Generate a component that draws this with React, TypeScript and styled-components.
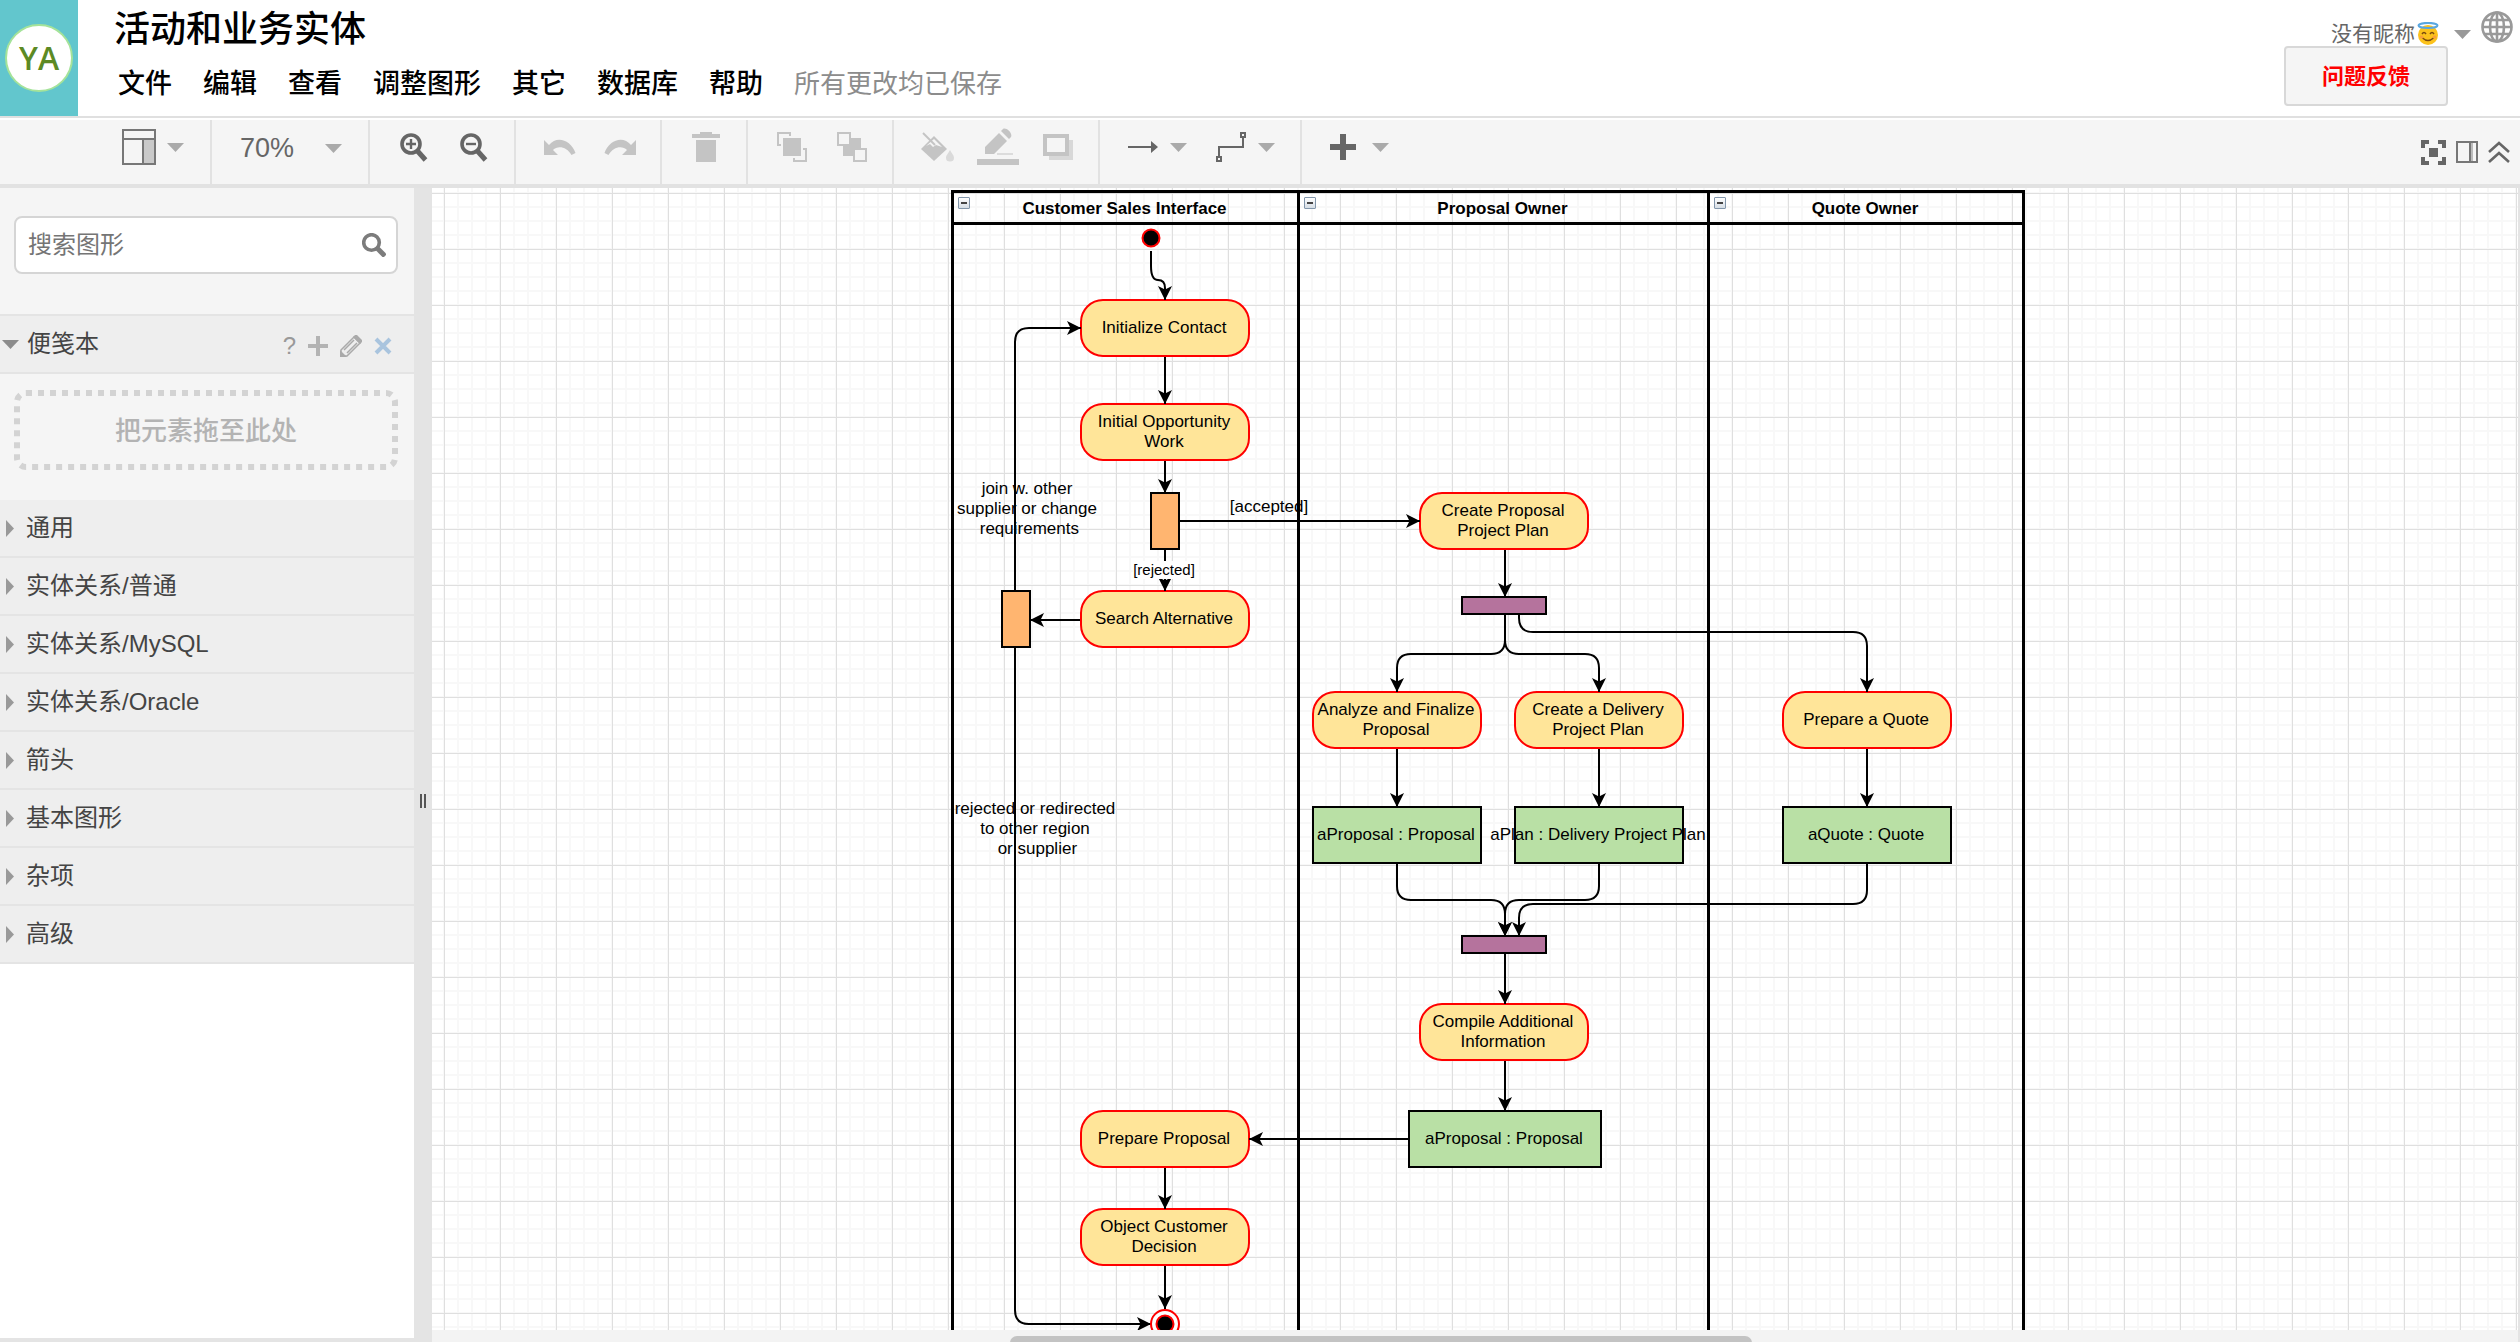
import React from "react";
import styled, { createGlobalStyle } from "styled-components";

const sans = `"Liberation Sans", Arial, "Noto Sans CJK SC", sans-serif`;

const GlobalStyle = createGlobalStyle`
  * { box-sizing: border-box; }
  body { margin: 0; background: #fff; font-family: ${sans}; overflow: hidden; }
  button, input, select { font-family: inherit; margin: 0; }
  svg { display: block; flex: none; }
`;

const Page = styled.div`
  display: flex;
  flex-direction: column;
  height: 100vh;
`;

/* ---------- header ---------- */

const Header = styled.header`
  display: flex;
  flex: none;
  height: 118px;
  border-bottom: 2px solid #e0e0e0;
`;

const Logo = styled.a`
  display: flex;
  align-items: center;
  justify-content: center;
  flex: none;
  width: 78px;
  background: #62c6cd;
  text-decoration: none;
`;

const LogoDisc = styled.span`
  display: flex;
  align-items: center;
  justify-content: center;
  width: 68px;
  height: 68px;
  border: 2px solid #a5e39a;
  border-radius: 50%;
  background: #fff;
  color: #5c8a24;
  font: 600 32px/32px "Open Sans", ${sans};
`;

const TitleBlock = styled.div`
  display: flex;
  flex-direction: column;
  flex: 1;
  gap: 14px;
  padding: 6px 0 0 36px;
`;

const DocTitle = styled.h1`
  margin: 0;
  font-size: 36px;
  line-height: 48px;
  font-weight: 500;
  color: #000;
`;

const MenuBar = styled.nav`
  display: flex;
  align-items: center;
  gap: 31px;
  padding-left: 4px;
`;

const MenuButton = styled.button`
  padding: 0;
  border: 0;
  background: none;
  font-size: 27px;
  line-height: 32px;
  font-weight: 500;
  color: #000;
`;

const SaveStatus = styled.span`
  font-size: 26px;
  line-height: 32px;
  color: #8c8c8c;
`;

const Account = styled.div`
  display: flex;
  flex-direction: column;
  align-items: flex-end;
`;

const UserRow = styled.div`
  display: flex;
  align-items: center;
  gap: 10px;
  height: 46px;
  padding: 8px 7px 0 0;
`;

const UserButton = styled.button`
  display: flex;
  align-items: center;
  gap: 2px;
  padding: 14px 0 0;
  border: 0;
  background: none;
  font-size: 21px;
  line-height: 24px;
  color: #666;
`;

const UserCaret = styled.span`
  padding-left: 13px;
`;

const IconButton = styled.button`
  display: flex;
  padding: 0;
  border: 0;
  background: none;
  color: inherit;
`;

const FeedbackButton = styled.button`
  width: 164px;
  height: 60px;
  margin-right: 72px;
  padding: 0 0 4px;
  border: 2px solid #d8d8d8;
  border-radius: 4px;
  background: #f5f5f5;
  font-size: 22px;
  font-weight: 700;
  color: #f00;
`;

/* ---------- toolbar ---------- */

const Toolbar = styled.div`
  display: flex;
  flex: none;
  height: 70px;
  padding-left: 98px;
  border-top: 2px solid #fff;
  border-bottom: 4px solid #e2e2e2;
  background: #f5f5f5;
`;

const Group = styled.div<{ $last?: boolean }>`
  display: flex;
  padding: 0 10px 0 14px;
  border-right: ${(p) => (p.$last ? "0" : "2px solid #e2e2e2")};
`;

const Tool = styled.button`
  display: flex;
  align-items: center;
  justify-content: center;
  width: 60px;
  padding: 0 0 10px;
  border: 0;
  background: none;
  color: #666;
  &:disabled { color: #c4c4c4; }
`;

const MenuTool = styled.button`
  display: flex;
  align-items: center;
  gap: 11px;
  width: 88px;
  padding: 0 0 10px 13px;
  border: 0;
  background: none;
  color: #666;
`;

const ViewMenuTool = styled(MenuTool)`
  padding-left: 10px;
`;

const ZoomField = styled.label`
  display: flex;
  align-items: center;
  width: 132px;
  padding: 0 16px 8px 14px;
`;

const ZoomSelect = styled.select`
  flex: 1;
  min-width: 0;
  padding: 0;
  border: 0;
  background: none;
  appearance: none;
  font-size: 27px;
  line-height: 32px;
  color: #666;
`;

const ViewTools = styled.div`
  display: flex;
  align-items: center;
  gap: 10px;
  margin-left: auto;
  padding-right: 10px;
  color: #666;
`;

/* ---------- sidebar ---------- */

const Body = styled.div`
  display: flex;
  flex: 1;
  min-height: 0;
`;

const Sidebar = styled.aside`
  flex: none;
  width: 414px;
  border-bottom: 4px solid #e4e4e4;
  background: #fff;
`;

const SearchArea = styled.div`
  padding: 28px 16px 40px 14px;
  background: #f5f5f5;
`;

const SearchBox = styled.label`
  display: flex;
  align-items: center;
  height: 58px;
  padding: 0 10px 0 12px;
  border: 2px solid #d5d5d5;
  border-radius: 8px;
  background: #fff;
`;

const SearchInput = styled.input`
  flex: 1;
  min-width: 0;
  padding: 0;
  border: 0;
  outline: 0;
  background: none;
  font-size: 24px;
  line-height: 32px;
  &::placeholder { color: #757575; opacity: 1; }
`;

const ScratchHeader = styled.div`
  display: flex;
  align-items: center;
  height: 60px;
  padding: 0 22px 0 2px;
  border: solid #e4e4e4;
  border-width: 2px 0;
  background: #eee;
`;

const ScratchToggle = styled.button`
  display: flex;
  align-items: center;
  flex: 1;
  gap: 8px;
  padding: 0;
  border: 0;
  background: none;
  font-size: 24px;
  line-height: 32px;
  color: #444;
`;

const ScratchTools = styled.div`
  display: flex;
  align-items: center;
  gap: 12px;
  padding-top: 4px;
`;

const HelpButton = styled(IconButton)`
  font-size: 24px;
  line-height: 24px;
  color: #999;
`;

const ScratchArea = styled.div`
  padding: 16px 16px 30px 14px;
  background: #f5f5f5;
`;

const DropZone = styled.div`
  position: relative;
  display: flex;
  align-items: center;
  justify-content: center;
  height: 80px;
  padding-bottom: 4px;
  font-size: 26px;
  font-weight: 500;
  color: #b3b3b3;
`;

const DropFrame = styled.svg`
  position: absolute;
  inset: 0;
  width: 100%;
  height: 100%;
  rect { width: calc(100% - 6px); height: calc(100% - 6px); }
`;

const Section = styled.button`
  display: flex;
  align-items: center;
  gap: 12px;
  width: 100%;
  height: 58px;
  padding: 0 0 0 6px;
  border: 0;
  border-bottom: 2px solid #e4e4e4;
  background: #eee;
  font-size: 24px;
  line-height: 32px;
  color: #444;
`;

const Splitter = styled.div`
  display: flex;
  align-items: center;
  justify-content: center;
  gap: 2px;
  flex: none;
  width: 18px;
  padding: 72px 0 0;
  background: #e4e4e4;
`;

const Grip = styled.span`
  width: 2px;
  height: 14px;
  background: #555;
`;

/* ---------- canvas ---------- */

const Stage = styled.main`
  display: flex;
  flex-direction: column;
  flex: 1;
  min-width: 0;
  border-right: 2px solid #e4e4e4;
`;

const Canvas = styled.div`
  position: relative;
  flex: 1;
  min-height: 0;
  overflow: hidden;
  background-color: #fff;
  background-image:
    linear-gradient(#dfdfdf 1px, transparent 1px),
    linear-gradient(90deg, #dfdfdf 1px, transparent 1px),
    linear-gradient(#f8f8f8 2px, transparent 2px),
    linear-gradient(90deg, #f8f8f8 2px, transparent 2px);
  background-size: 56px 56px, 56px 56px, 14px 14px, 14px 14px;
  background-position: 12px 5px, 12px 5px, 11px 4px, 11px 4px;
`;

const ScrollTrack = styled.div`
  flex: none;
  height: 12px;
  padding: 6px 0 0 578px;
  background: #f3f3f3;
  overflow: hidden;
`;

const ScrollThumb = styled.div`
  width: 742px;
  height: 14px;
  border-radius: 7px;
  background: #c3c3c3;
`;

const Lanes = styled.div`
  position: absolute;
  left: 519px;
  top: 2px;
  bottom: -60px;
  display: flex;
`;

const Lane = styled.section<{ $w: number }>`
  position: relative;
  width: ${(p) => p.$w}px;
  border: 3px solid #000;
  & + & { margin-left: -3px; }
`;

const LaneTitle = styled.h2`
  margin: 0;
  height: 32px;
  padding: 1px 2px 0 0;
  border-bottom: 3px solid #000;
  font-size: 17px;
  line-height: 29px;
  text-align: center;
  color: #000;
`;

const Collapse = styled.button`
  position: absolute;
  left: 4px;
  top: 4px;
  display: flex;
  align-items: center;
  justify-content: center;
  width: 12px;
  height: 12px;
  padding: 0;
  border: 1px solid #8296ab;
  border-radius: 1px;
  background: linear-gradient(#fff, #d5dde5);
  &::before { content: ""; width: 6px; height: 2px; background: #444; }
`;

const fills = { action: "#ffe599", object: "#b9e0a5", fork: "#ffb570", bar: "#b5739d" };
type Kind = keyof typeof fills;

const Node = styled.div<{ $x: number; $y: number; $w: number; $h: number; $kind: Kind }>`
  position: absolute;
  left: ${(p) => p.$x}px;
  top: ${(p) => p.$y}px;
  width: ${(p) => p.$w}px;
  height: ${(p) => p.$h}px;
  display: flex;
  align-items: center;
  justify-content: center;
  padding: 0 2px 1px 0;
  border: 2px solid ${(p) => (p.$kind === "action" ? "#f00" : "#000")};
  border-radius: ${(p) => (p.$kind === "action" ? 23 : 0)}px;
  background: ${(p) => fills[p.$kind]};
  font-size: 17px;
  line-height: 20px;
  text-align: center;
  white-space: pre;
  color: #000;
`;

const Edges = styled.svg`
  position: absolute;
  left: 0;
  top: 0;
  width: 100%;
  height: 100%;
  pointer-events: none;
`;

const EdgeLabel = styled.div<{ $x: number; $y: number; $small?: boolean }>`
  position: absolute;
  left: ${(p) => p.$x}px;
  top: ${(p) => p.$y}px;
  transform: translate(-50%, -50%);
  background: ${(p) => (p.$small ? "#fff" : "none")};
  font-size: ${(p) => (p.$small ? 15 : 17)}px;
  line-height: ${(p) => (p.$small ? 18 : 20)}px;
  text-align: center;
  white-space: pre;
  color: #000;
`;

/* ---------- icons ---------- */

const Caret = ({ color = "#aaa" }: { color?: string }) => (
  <svg width="17" height="9" viewBox="0 0 17 9"><path d="M0 0h17L8.500 9z" fill={color} /></svg>
);
const CaretRight = () => (
  <svg width="8" height="17" viewBox="0 0 8 17"><path d="M0 0v17l8-8.500z" fill="#999" /></svg>
);

const FormatIcon = () => (
  <svg width="34" height="36" viewBox="0 0 34 36" fill="none" stroke="#777" strokeWidth="2">
    <path d="M21 10h12v25H21z" fill="#c9c9c9" />
    <path d="M1 1h32v34H1zM1 10h32" />
  </svg>
);

const Magnifier = ({ plus }: { plus?: boolean }) => (
  <svg width="28" height="30" viewBox="0 0 28 30" fill="none" stroke="currentColor">
    <circle cx="11" cy="12" r="9" strokeWidth="3.600" />
    <path d="M17.500 19l8 9" strokeWidth="5" />
    <path d={plus ? "M6 12h10M11 7v10" : "M6 12h10"} strokeWidth="2.400" />
  </svg>
);

const Bend = ({ flip }: { flip?: boolean }) => (
  <svg width="32" height="18" viewBox="0 0 32 18" fill="currentColor">
    <g transform={flip ? "translate(32 0) scale(-1 1)" : undefined}>
      <path d="M0 2v15h14l-5-5c5-5 14-3 18.500 5l4-2C27 2 13-3 5 7z" />
    </g>
  </svg>
);

const TrashIcon = () => (
  <svg width="28" height="30" viewBox="0 0 28 30" fill="currentColor">
    <path d="M8 0h12v2h8v4H0V2h8zM4 8h20v22H4z" />
  </svg>
);

const FrontIcon = () => (
  <svg width="30" height="30" viewBox="0 0 30 30" fill="none" stroke="currentColor" strokeWidth="2">
    <path d="M6 6h18v18H6z" fill="currentColor" stroke="none" />
    <path d="M4 13H1V1h12v3M26 17h3v12H17v-3" />
  </svg>
);

const BackIcon = () => (
  <svg width="30" height="30" viewBox="0 0 30 30" fill="#f5f5f5" stroke="currentColor" strokeWidth="2">
    <path d="M6 6h18v18H6z" fill="currentColor" stroke="none" />
    <path d="M1 1h12v12H1zM17 17h12v12H17z" />
  </svg>
);

const FillIcon = () => (
  <svg width="34" height="30" viewBox="0 0 34 30">
    <path d="M0 17L13 4l13 13-13 12z" fill="currentColor" />
    <path d="M13 7l8 8-6-2-3 2-3-3-4 2z" fill="#f5f5f5" />
    <path d="M2 1l12 12" stroke="currentColor" strokeWidth="2" />
    <path d="M29 18c2 4 4 5 4 8a4 3.500 0 0 1-8 0c0-3 2-4 4-8z" fill="#dadada" />
  </svg>
);

const LineColorIcon = () => (
  <svg width="42" height="38" viewBox="0 0 42 38" fill="currentColor">
    <path d="M8 19L22 5l8 8-13 13H8zM24 3l2-2c3-2 10 4 8 8l-2 2z" />
    <path d="M20 25h16v2H20z" fill="#dcdcdc" />
    <path d="M0 31h42v6H0z" />
  </svg>
);

const ShadowIcon = () => (
  <svg width="30" height="26" viewBox="0 0 30 26" fill="none">
    <path d="M6 6h24v20H6z" fill="#d8d8d8" />
    <path d="M2 2h22v18H2z" fill="#f5f5f5" stroke="currentColor" strokeWidth="4" />
  </svg>
);

const ArrowIcon = () => (
  <svg width="32" height="14" viewBox="0 0 32 14" fill="currentColor">
    <path d="M1 6h23V1l7 6-7 6V8H1z" />
  </svg>
);

const WaypointIcon = () => (
  <svg width="32" height="32" viewBox="0 0 32 32" fill="none" stroke="currentColor" strokeWidth="2">
    <path d="M4 25V16h24V7M2 26h4v4H2zM26 2h4v4h-4z" />
  </svg>
);

const InsertIcon = () => (
  <svg width="32" height="28" viewBox="0 0 32 28" stroke="currentColor" strokeWidth="6">
    <path d="M1 14h26M14 1v26" />
  </svg>
);

const AddIcon = () => (
  <svg width="20" height="20" viewBox="0 0 20 20" stroke="#b3b3b3" strokeWidth="4">
    <path d="M0 10h20M10 0v20" />
  </svg>
);

const FullscreenIcon = () => (
  <svg width="25" height="25" viewBox="0 0 25 25" fill="currentColor">
    <path d="M0 0h8v4H4v4H0zM17 0h8v8h-4V4h-4zM0 17h4v4h4v4H0zM21 17h4v8h-8v-4h4zM8 8h9v9H8z" />
  </svg>
);

const PanelIcon = () => (
  <svg width="22" height="22" viewBox="0 0 22 22" fill="none" stroke="#777" strokeWidth="2">
    <path d="M16 1v20" stroke="#bbb" />
    <path d="M1 1h20v20H1zM14 1v20" />
  </svg>
);

const ChevronsIcon = () => (
  <svg width="22" height="22" viewBox="0 0 22 22" fill="none" stroke="currentColor" strokeWidth="2.600">
    <path d="M1 11l10-9 10 9M1 21l10-9 10 9" />
  </svg>
);

const GlobeIcon = () => (
  <svg width="32" height="32" viewBox="0 0 32 32" fill="none" stroke="#999" strokeWidth="2.600">
    <circle cx="16" cy="16" r="14.500" />
    <ellipse cx="16" cy="16" rx="7" ry="14.500" />
    <path d="M16 1v30M2 16h28M4 9h24M4 23h24" />
  </svg>
);

const AngelFace = () => (
  <svg width="22" height="24" viewBox="0 0 22 24">
    <circle cx="11" cy="13" r="10" fill="#fcc21b" />
    <ellipse cx="11" cy="3.500" rx="9.500" ry="2.600" fill="none" stroke="#5aa7e0" strokeWidth="2" />
    <path d="M5 12q2-3 4 0M13 12q2-3 4 0M5.500 16q5.500 5 11 0" fill="none" stroke="#7a4a10" strokeWidth="1.500" />
    <ellipse cx="4.500" cy="15" rx="2" ry="1.500" fill="#f9a03c" />
    <ellipse cx="17.500" cy="15" rx="2" ry="1.500" fill="#f9a03c" />
  </svg>
);

const SearchIcon = () => (
  <svg width="24" height="24" viewBox="0 0 24 24" fill="none" stroke="#7c7c7c">
    <circle cx="9.500" cy="9.500" r="7.800" strokeWidth="3.600" />
    <path d="M15 15l8 8" strokeWidth="5" />
  </svg>
);

const PencilIcon = () => (
  <svg width="22" height="22" viewBox="0 0 22 22" fill="none" stroke="#aaa" strokeWidth="1.500">
    <path d="M1 15L14 2l6 6L7 21H1z" />
    <path d="M4 15L14 5M7 18L17 8" />
    <path d="M0 15l7 7H0zM13 2l2-2h2l5 5v2l-2 2z" fill="#aaa" stroke="none" />
  </svg>
);

const CrossIcon = () => (
  <svg width="18" height="18" viewBox="0 0 18 18" stroke="#a9c4de" strokeWidth="4">
    <path d="M2 2l14 14M16 2L2 16" />
  </svg>
);

/* ---------- data ---------- */

const menus = ["文件", "编辑", "查看", "调整图形", "其它", "数据库", "帮助"];
const sections = ["通用", "实体关系/普通", "实体关系/MySQL", "实体关系/Oracle", "箭头", "基本图形", "杂项", "高级"];
const lanes = [
  { title: "Customer Sales Interface", w: 349 },
  { title: "Proposal Owner", w: 413 },
  { title: "Quote Owner", w: 318 },
];

const nodes: { x: number; y: number; w?: number; h?: number; kind: Kind; text?: string }[] = [
  { x: 648, y: 111, kind: "action", text: "Initialize Contact" },
  { x: 648, y: 215, kind: "action", text: "Initial Opportunity\nWork" },
  { x: 718, y: 304, w: 30, kind: "fork" },
  { x: 648, y: 402, kind: "action", text: "Search Alternative" },
  { x: 569, y: 402, w: 30, kind: "fork" },
  { x: 987, y: 304, kind: "action", text: "Create Proposal\nProject Plan" },
  { x: 1029, y: 408, w: 86, h: 19, kind: "bar" },
  { x: 880, y: 503, kind: "action", text: "Analyze and Finalize\nProposal" },
  { x: 1082, y: 503, kind: "action", text: "Create a Delivery\nProject Plan" },
  { x: 1350, y: 503, kind: "action", text: "Prepare a Quote" },
  { x: 880, y: 618, kind: "object", text: "aProposal : Proposal" },
  { x: 1082, y: 618, kind: "object", text: "aPlan : Delivery Project Plan" },
  { x: 1350, y: 618, kind: "object", text: "aQuote : Quote" },
  { x: 1029, y: 747, w: 86, h: 19, kind: "bar" },
  { x: 987, y: 815, kind: "action", text: "Compile Additional\nInformation" },
  { x: 976, y: 922, w: 194, kind: "object", text: "aProposal : Proposal" },
  { x: 648, y: 922, kind: "action", text: "Prepare Proposal" },
  { x: 648, y: 1020, kind: "action", text: "Object Customer\nDecision" },
];

const edges = [
  "M719 63V78Q719 92 726 92Q733 92 733 100V112",
  "M733 169V216",
  "M733 273V305",
  "M733 362V403",
  "M648 432H598",
  "M583 402V154Q583 140 597 140H649",
  "M748 333H988",
  "M1073 362V409",
  "M1073 427V452Q1073 466 1059 466H979Q965 466 965 480V504",
  "M1073 427V452Q1073 466 1087 466H1153Q1167 466 1167 480V504",
  "M1087 427V430Q1087 444 1101 444H1421Q1435 444 1435 458V504",
  "M965 561V619",
  "M1167 561V619",
  "M1435 561V619",
  "M965 676V698Q965 712 979 712H1059Q1073 712 1073 726V748",
  "M1167 676V698Q1167 712 1153 712H1087Q1073 712 1073 726V748",
  "M1435 676V702Q1435 716 1421 716H1101Q1087 716 1087 730V748",
  "M1073 766V816",
  "M1073 873V923",
  "M976 951H817",
  "M733 980V1021",
  "M733 1078V1121",
  "M583 460V1122Q583 1136 597 1136H719",
];

const edgeLabels = [
  { x: 595, y: 321, text: "join w. other\nsupplier or change\n requirements" },
  { x: 603, y: 641, text: "rejected or redirected\nto other region\n or supplier" },
  { x: 837, y: 319, text: "[accepted]" },
  { x: 732, y: 382, text: "[rejected]", small: true },
];

export default function App() {
  return (
    <Page>
      <GlobalStyle />
      <Header>
        <Logo href="#"><LogoDisc>YA</LogoDisc></Logo>
        <TitleBlock>
          <DocTitle>活动和业务实体</DocTitle>
          <MenuBar>
            {menus.map((m) => <MenuButton key={m}>{m}</MenuButton>)}
            <SaveStatus>所有更改均已保存</SaveStatus>
          </MenuBar>
        </TitleBlock>
        <Account>
          <UserRow>
            <UserButton>
              没有昵称<AngelFace />
              <UserCaret><Caret color="#999" /></UserCaret>
            </UserButton>
            <IconButton aria-label="语言"><GlobeIcon /></IconButton>
          </UserRow>
          <FeedbackButton>问题反馈</FeedbackButton>
        </Account>
      </Header>

      <Toolbar>
        <Group><ViewMenuTool aria-label="视图"><FormatIcon /><Caret /></ViewMenuTool></Group>
        <Group>
          <ZoomField>
            <ZoomSelect aria-label="缩放" defaultValue="70%"><option>70%</option></ZoomSelect>
            <Caret />
          </ZoomField>
        </Group>
        <Group>
          <Tool aria-label="放大"><Magnifier plus /></Tool>
          <Tool aria-label="缩小"><Magnifier /></Tool>
        </Group>
        <Group>
          <Tool aria-label="撤销" disabled><Bend /></Tool>
          <Tool aria-label="重做" disabled><Bend flip /></Tool>
        </Group>
        <Group><Tool aria-label="删除" disabled><TrashIcon /></Tool></Group>
        <Group>
          <Tool aria-label="移至最前" disabled><FrontIcon /></Tool>
          <Tool aria-label="移至最后" disabled><BackIcon /></Tool>
        </Group>
        <Group>
          <Tool aria-label="填充颜色" disabled><FillIcon /></Tool>
          <Tool aria-label="线条颜色" disabled><LineColorIcon /></Tool>
          <Tool aria-label="阴影" disabled><ShadowIcon /></Tool>
        </Group>
        <Group>
          <MenuTool aria-label="连接"><ArrowIcon /><Caret /></MenuTool>
          <MenuTool aria-label="航点"><WaypointIcon /><Caret /></MenuTool>
        </Group>
        <Group $last>
          <MenuTool aria-label="插入"><InsertIcon /><Caret /></MenuTool>
        </Group>
        <ViewTools>
          <IconButton aria-label="全屏"><FullscreenIcon /></IconButton>
          <IconButton aria-label="格式"><PanelIcon /></IconButton>
          <IconButton aria-label="折叠"><ChevronsIcon /></IconButton>
        </ViewTools>
      </Toolbar>

      <Body>
        <Sidebar>
          <SearchArea>
            <SearchBox>
              <SearchInput type="text" placeholder="搜索图形" aria-label="搜索图形" />
              <SearchIcon />
            </SearchBox>
          </SearchArea>
          <ScratchHeader>
            <ScratchToggle><Caret color="#8c8c8c" />便笺本</ScratchToggle>
            <ScratchTools>
              <HelpButton>?</HelpButton>
              <IconButton aria-label="添加"><AddIcon /></IconButton>
              <IconButton aria-label="编辑"><PencilIcon /></IconButton>
              <IconButton aria-label="关闭"><CrossIcon /></IconButton>
            </ScratchTools>
          </ScratchHeader>
          <ScratchArea>
            <DropZone>
              <DropFrame aria-hidden="true">
                <rect x="3" y="3" rx="9" fill="none" stroke="#d3d3d3" strokeWidth="6" strokeDasharray="6 6" />
              </DropFrame>
              把元素拖至此处
            </DropZone>
          </ScratchArea>
          {sections.map((s) => <Section key={s}><CaretRight />{s}</Section>)}
        </Sidebar>

        <Splitter><Grip /><Grip /></Splitter>

        <Stage>
          <Canvas>
            <Lanes>
              {lanes.map((l) => (
                <Lane key={l.title} $w={l.w}>
                  <LaneTitle>{l.title}</LaneTitle>
                  <Collapse aria-label="折叠" />
                </Lane>
              ))}
            </Lanes>
            {nodes.map((n, i) => (
              <Node key={i} $x={n.x} $y={n.y} $w={n.w ?? 170} $h={n.h ?? 58} $kind={n.kind}>{n.text}</Node>
            ))}
            <Edges>
              <defs>
                <marker id="arrow" markerUnits="userSpaceOnUse" markerWidth="16" markerHeight="16" refX="14" refY="7" orient="auto">
                  <path d="M14 7L0 0l3.500 7L0 14z" fill="#000" />
                </marker>
              </defs>
              <g fill="none" stroke="#000" strokeWidth="2">
                {edges.map((d) => <path key={d} d={d} markerEnd="url(#arrow)" />)}
              </g>
              <g stroke="#f00" strokeWidth="2">
                <circle cx="719" cy="50" r="8.500" />
                <circle cx="733" cy="1136" r="14" fill="#fff" />
                <circle cx="733" cy="1136" r="8.500" />
              </g>
            </Edges>
            {edgeLabels.map((l) => (
              <EdgeLabel key={l.text} $x={l.x} $y={l.y} $small={l.small}>{l.text}</EdgeLabel>
            ))}
          </Canvas>
          <ScrollTrack><ScrollThumb /></ScrollTrack>
        </Stage>
      </Body>
    </Page>
  );
}
